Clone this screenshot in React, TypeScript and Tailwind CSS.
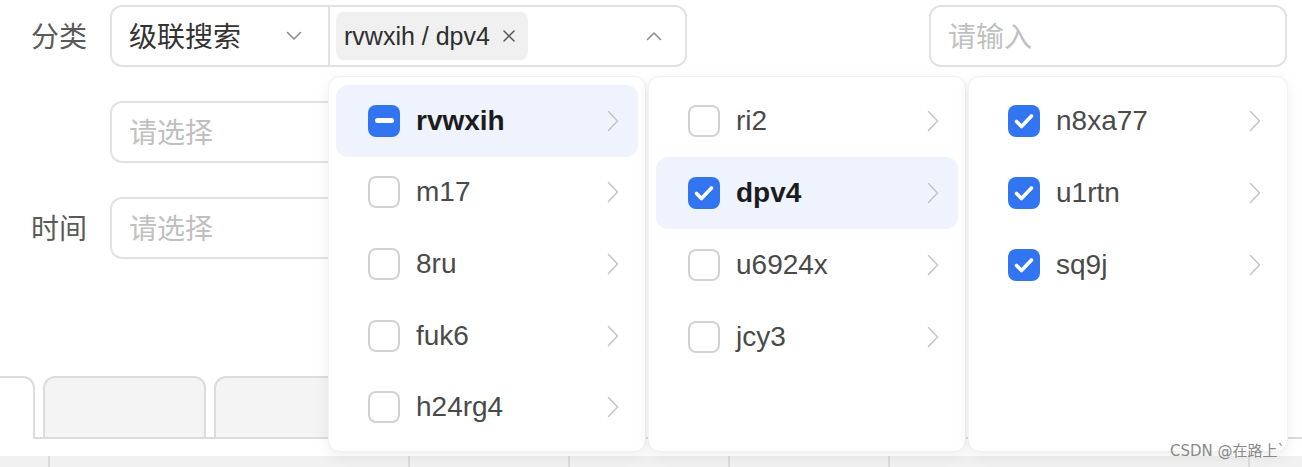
import React from "react";

const FONT = { fontFamily: '"Liberation Sans", "Noto Sans CJK SC", sans-serif' };

function Chevron({ dir }: { dir: "down" | "up" | "right" }) {
  if (dir === "right")
    return (
      <svg width="12" height="22" viewBox="0 0 12 22" className="ml-auto shrink-0">
        <polyline points="1.5,1.5 10.5,11 1.5,20.5" fill="none" stroke="#c6c6c6" strokeWidth="1.6" strokeLinecap="round" strokeLinejoin="round" />
      </svg>
    );
  return (
    <svg width="16" height="10" viewBox="0 0 16 10" className="shrink-0">
      <polyline
        points={dir === "down" ? "1.5,1.5 8,8 14.5,1.5" : "1.5,8.5 8,2 14.5,8.5"}
        fill="none"
        stroke="#8c8c8c"
        strokeWidth="1.6"
        strokeLinecap="round"
        strokeLinejoin="round"
      />
    </svg>
  );
}

function Box({ state }: { state: "none" | "checked" | "half" }) {
  if (state === "none")
    return <div className="w-[32px] h-[32px] shrink-0 rounded-[8px] border-2 border-[#d2d2d2] bg-white" />;
  return (
    <div className="w-[32px] h-[32px] shrink-0 rounded-[8px] bg-[#3275f0] flex items-center justify-center">
      {state === "checked" ? (
        <svg width="32" height="32" viewBox="0 0 32 32">
          <polyline points="8.5,16.5 13.5,21.5 23.5,11" fill="none" stroke="white" strokeWidth="3.6" strokeLinecap="round" strokeLinejoin="round" />
        </svg>
      ) : (
        <div className="w-[19px] h-[5px] rounded-full bg-white" />
      )}
    </div>
  );
}

type Item = { label: string; state: "none" | "checked" | "half"; active?: boolean };

function Column({ items, wide }: { items: Item[]; wide?: boolean }) {
  return (
    <div
      className={`${wide ? "w-[320px]" : "w-[318px]"} h-[376px] bg-white rounded-[12px] border border-[#f0f0f0] shadow-[0_4px_14px_rgba(0,0,0,0.07)] py-[8px] flex flex-col`}
    >
      {items.map((it) => (
        <div
          key={it.label}
          className={`h-[72px] mx-[7px] rounded-[12px] flex items-center pl-[32px] pr-[19px] ${it.active ? "bg-[#eef3fd]" : ""}`}
        >
          <Box state={it.state} />
          <span
            className={`ml-[16px] text-[28px] leading-none ${it.active ? "font-bold text-[#1c1c1c]" : "text-[#4a4a4a]"}`}
          >
            {it.label}
          </span>
          <Chevron dir="right" />
        </div>
      ))}
    </div>
  );
}

export default function App() {
  const col1: Item[] = [
    { label: "rvwxih", state: "half", active: true },
    { label: "m17", state: "none" },
    { label: "8ru", state: "none" },
    { label: "fuk6", state: "none" },
    { label: "h24rg4", state: "none" },
  ];
  const col2: Item[] = [
    { label: "ri2", state: "none" },
    { label: "dpv4", state: "checked", active: true },
    { label: "u6924x", state: "none" },
    { label: "jcy3", state: "none" },
  ];
  const col3: Item[] = [
    { label: "n8xa77", state: "checked" },
    { label: "u1rtn", state: "checked" },
    { label: "sq9j", state: "checked" },
  ];

  return (
    <div className="relative w-[1302px] h-[467px] bg-white overflow-hidden" style={FONT}>
      <div className="flex flex-col pt-[5px]">
        {/* row 1 */}
        <div className="flex items-center h-[62px]">
          <div className="w-[110px] pl-[31px] pt-[3px] text-[28px] text-[#5a5a5a] leading-none">分类</div>
          <div className="flex w-[577px] h-[62px] rounded-[12px] border-2 border-[#e2e2e2]">
            <div className="w-[218px] flex items-center pl-[17px] pr-[26px] border-r-2 border-[#e2e2e2]">
              <span className="pt-[3px] text-[28px] text-[#333333] leading-none">级联搜索</span>
              <span className="ml-auto">
                <Chevron dir="down" />
              </span>
            </div>
            <div className="flex-1 flex items-center pl-[6px] pr-[23px]">
              <div className="h-[48px] w-[192px] rounded-[8px] bg-[#f0f0f0] flex items-center pl-[8px]">
                <span className="text-[25px] text-[#2e2e2e] leading-none">rvwxih / dpv4</span>
                <svg width="14" height="14" viewBox="0 0 14 14" className="ml-[12px]">
                  <path d="M2 2 L12 12 M12 2 L2 12" stroke="#555" strokeWidth="1.5" strokeLinecap="round" />
                </svg>
              </div>
              <span className="ml-auto">
                <Chevron dir="up" />
              </span>
            </div>
          </div>
          <div className="ml-[242px] w-[358px] h-[62px] rounded-[12px] border-2 border-[#e2e2e2] flex items-center pl-[17px]">
            <span className="pt-[3px] text-[28px] text-[#c0c0c0] leading-none">请输入</span>
          </div>
        </div>

        {/* row 2 */}
        <div className="flex items-center h-[62px] mt-[34px]">
          <div className="w-[110px]" />
          <div className="w-[360px] h-[62px] rounded-[12px] border-2 border-[#e2e2e2] flex items-center pl-[17px]">
            <span className="pt-[3px] text-[28px] text-[#c0c0c0] leading-none">请选择</span>
          </div>
        </div>

        {/* row 3 */}
        <div className="flex items-center h-[62px] mt-[34px]">
          <div className="w-[110px] pl-[31px] pt-[3px] text-[28px] text-[#5a5a5a] leading-none">时间</div>
          <div className="w-[360px] h-[62px] rounded-[12px] border-2 border-[#e2e2e2] flex items-center pl-[17px]">
            <span className="pt-[3px] text-[28px] text-[#c0c0c0] leading-none">请选择</span>
          </div>
        </div>

        {/* tabs */}
        <div className="flex mt-[117px] h-[63px]">
          <div className="w-[35px] h-[63px] bg-white border-t-2 border-r-2 border-[#dcdcdc] rounded-tr-[12px]" />
          <div className="flex-1 flex items-end gap-[8px] pl-[8px] border-b-2 border-[#dcdcdc]">
            <div className="w-[163px] h-[61px] bg-[#f4f4f4] border-2 border-b-0 border-[#dcdcdc] rounded-t-[12px]" />
            <div className="w-[200px] h-[61px] bg-[#f4f4f4] border-2 border-b-0 border-[#dcdcdc] rounded-t-[12px]" />
          </div>
        </div>

        {/* table header band */}
        <div className="mt-[17px] h-[12px] bg-[#f0f0f0] flex">
          <div className="w-[50px] border-r-2 border-[#dadada]" />
          <div className="w-[360px] border-r-2 border-[#dadada]" />
          <div className="w-[160px] border-r-2 border-[#dadada]" />
          <div className="w-[160px] border-r-2 border-[#dadada]" />
          <div className="w-[160px] border-r-2 border-[#dadada]" />
          <div className="w-[360px] border-r-2 border-[#dadada]" />
          <div className="flex-1" />
        </div>
      </div>

      {/* dropdown */}
      <div className="absolute left-[328px] top-[76px] flex gap-[2px]">
        <Column items={col1} />
        <Column items={col2} />
        <Column items={col3} wide />
      </div>

      <div className="absolute right-[17px] bottom-[8px] text-[15px] text-[#8a8a8a] leading-none" style={{ fontFamily: '"DejaVu Sans", "Noto Sans CJK SC", sans-serif' }}>
        CSDN @在路上`
      </div>
    </div>
  );
}
